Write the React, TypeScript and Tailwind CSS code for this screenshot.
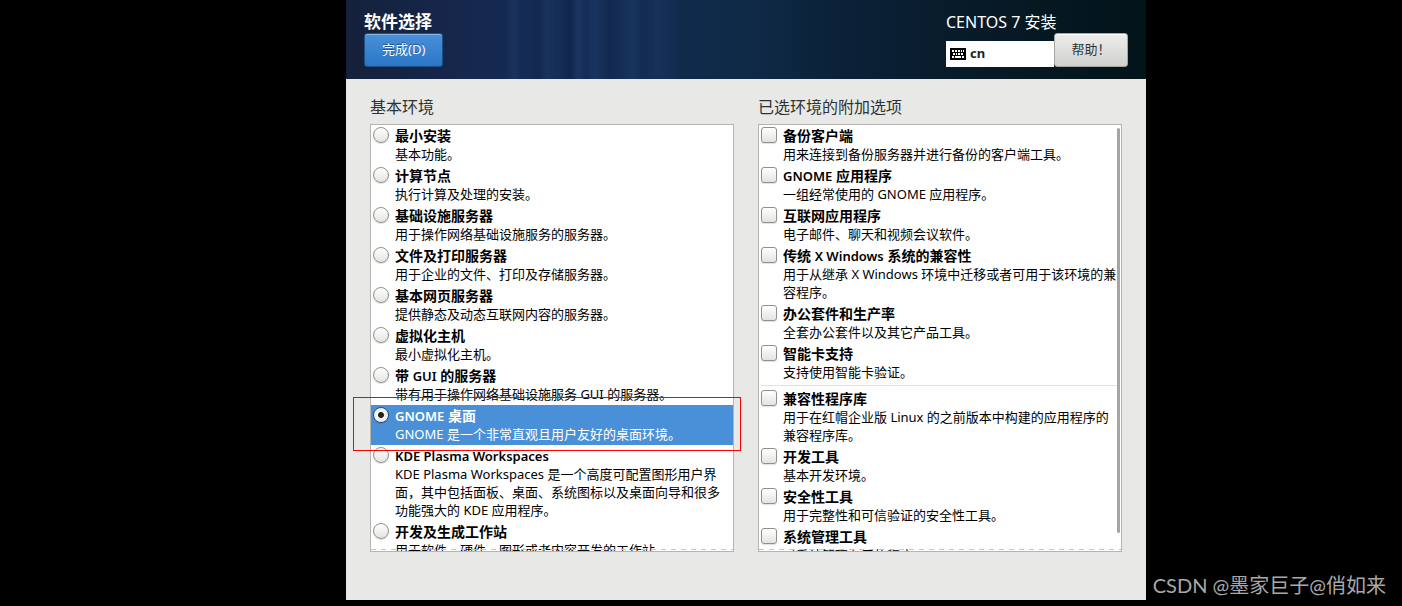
import React from 'react';

type Item = {
  title: string;
  description: string;
};

const environments: Item[] = [
  { title: '最小安装', description: '基本功能。' },
  { title: '计算节点', description: '执行计算及处理的安装。' },
  { title: '基础设施服务器', description: '用于操作网络基础设施服务的服务器。' },
  { title: '文件及打印服务器', description: '用于企业的文件、打印及存储服务器。' },
  { title: '基本网页服务器', description: '提供静态及动态互联网内容的服务器。' },
  { title: '虚拟化主机', description: '最小虚拟化主机。' },
  { title: '带 GUI 的服务器', description: '带有用于操作网络基础设施服务 GUI 的服务器。' },
  { title: 'GNOME 桌面', description: 'GNOME 是一个非常直观且用户友好的桌面环境。' },
  {
    title: 'KDE Plasma Workspaces',
    description: 'KDE Plasma Workspaces 是一个高度可配置图形用户界面，其中包括面板、桌面、系统图标以及桌面向导和很多功能强大的 KDE 应用程序。'
  },
  { title: '开发及生成工作站', description: '用于软件、硬件、图形或者内容开发的工作站。' }
];

const environmentAddons: Item[] = [
  { title: '备份客户端', description: '用来连接到备份服务器并进行备份的客户端工具。' },
  { title: 'GNOME 应用程序', description: '一组经常使用的 GNOME 应用程序。' },
  { title: '互联网应用程序', description: '电子邮件、聊天和视频会议软件。' },
  { title: '传统 X Windows 系统的兼容性', description: '用于从继承 X Windows 环境中迁移或者可用于该环境的兼容程序。' },
  { title: '办公套件和生产率', description: '全套办公套件以及其它产品工具。' },
  { title: '智能卡支持', description: '支持使用智能卡验证。' }
];

const commonAddons: Item[] = [
  { title: '兼容性程序库', description: '用于在红帽企业版 Linux 的之前版本中构建的应用程序的兼容程序库。' },
  { title: '开发工具', description: '基本开发环境。' },
  { title: '安全性工具', description: '用于完整性和可信验证的安全性工具。' },
  { title: '系统管理工具', description: '对系统管理有用的程序。' }
];

const KeyboardIcon = () => (
  <svg width="16" height="12" viewBox="0 0 16 12" shapeRendering="crispEdges" aria-hidden="true">
    <rect width="16" height="12" rx="1" fill="#000" />
    <path
      fill="#fff"
      d="M2 2h2v2H2zM5 2h2v2H5zM8 2h2v2H8zM11 2h1v2h-1zM13 2h1v2h-1zM3 5h2v2H3zM6 5h1v2H6zM8 5h2v2H8zM11 5h2v2h-2zM2 8h2v2H2zM5 8h6v2H5zM12 8h2v2h-2z"
    />
  </svg>
);

// Latin words sit one size below the Chinese glyphs around them
const Title = ({ text }: { text: string }) => (
  <span className="block text-[14px] leading-[18px] font-bold">
    {text.split(/([A-Za-z][A-Za-z ]*[A-Za-z]|[A-Za-z])/).map((part, index) =>
      /[A-Za-z]/.test(part) ? (
        <span key={index} className="text-[13px] font-semibold">{part}</span>
      ) : (
        part
      )
    )}
  </span>
);

const Row = ({ item, type, selected = false }: { item: Item; type: 'radio' | 'checkbox'; selected?: boolean }) => (
  <label className={`flex gap-1.5 p-0.5 ${selected ? 'bg-[#4a90d9] text-white' : 'text-black'}`}>
    <input
      type={type}
      name={type === 'radio' ? 'environment' : item.title}
      defaultChecked={selected}
      className={`size-4 shrink-0 appearance-none border border-[#8f8f8c] bg-linear-to-b from-white to-[#e3e3e1] shadow-[0_1px_1px_rgba(0,0,0,0.12)] ${
        type === 'radio'
          ? 'rounded-full checked:border-[#2d4c70] checked:bg-[radial-gradient(circle,#222_0_2px,#222_2.5px,#f2f2f2_3.5px)]'
          : 'rounded-[3px]'
      }`}
    />
    <span className="min-w-0 flex-1">
      <Title text={item.title} />
      <span className="block text-[13px] leading-[18px]">{item.description}</span>
    </span>
  </label>
);

const Overflow = () => (
  <div className="absolute inset-x-0 bottom-[1px] h-px bg-[repeating-linear-gradient(90deg,#c4c4c4_0_5px,transparent_5px_10px)]" />
);

const App = () => {
  return (
    <div
      lang="zh-CN"
      className="relative flex h-screen flex-col bg-black pr-[256px] pb-1.5 pl-[346px] font-['Noto_Sans','Noto_Sans_CJK_SC',sans-serif]"
    >
      <main className="flex min-h-0 flex-1 flex-col bg-[#e8e8e6]">
        <header className="flex h-[79px] shrink-0 items-start justify-between bg-[linear-gradient(90deg,transparent_20%,rgba(70,120,200,0.1)_21%,transparent_22%,transparent_23%,rgba(0,10,30,0.15)_24%,rgba(70,120,200,0.08)_25%,transparent_27%,rgba(0,10,30,0.2)_28%,rgba(70,120,200,0.12)_29%,transparent_30%,rgba(70,120,200,0.1)_31%,rgba(0,10,30,0.12)_33%,transparent_34%,rgba(70,120,200,0.1)_36%,transparent_37%,rgba(70,120,200,0.08)_39%,transparent_42%),linear-gradient(90deg,#15213a_0%,#16264a_12%,#152c55_25%,#142d56_33%,#102a4c_42%,#0f2a47_50%,#0b2138_62%,#071a27_80%,#021418_100%)] px-[18px] pt-[11px]">
          <div>
            <h1 className="text-[17px] leading-[22px] font-bold text-white">软件选择</h1>
            <button className="h-[34px] rounded-[3px] border border-[#1c5187] bg-linear-to-b from-[#4a90d9] to-[#2a76c6] px-[17px] text-[13px] text-white shadow-[inset_0_1px_0_#86b5e6] [text-shadow:0_-1px_0_rgba(0,0,0,0.4)]">
              完成(D)
            </button>
          </div>
          <div>
            <h2 className="text-[16px] leading-[22px] text-white">CENTOS 7 安装</h2>
            <div className="flex items-end">
              <button className="flex h-[26px] w-[108px] items-center gap-1 bg-white pl-1 text-[13px] font-bold text-[#1c1f20]">
                <KeyboardIcon />
                cn
              </button>
              <button className="h-[34px] w-[74px] rounded-[3px] border border-[#a5a5a1] bg-linear-to-b from-[#ededed] to-[#d0d0cd] text-[13px] text-[#2e3436] shadow-[inset_0_1px_0_#fff]">
                帮助！
              </button>
            </div>
          </div>
        </header>

        <div className="grid min-h-0 flex-1 grid-cols-2 gap-6 px-6 pt-4 pb-12">
          <section className="flex min-h-0 flex-col">
            <h3 className="mb-[5px] text-[16px] leading-6 text-[#2e3436]">基本环境</h3>
            <div className="relative flex min-h-0 flex-1 flex-col">
              <div className="relative min-h-0 flex-1 overflow-hidden border border-[#b4b4b1] bg-white">
                {environments.map((item) => (
                  <Row key={item.title} item={item} type="radio" selected={item.title === 'GNOME 桌面'} />
                ))}
                <Overflow />
              </div>
              {/* callout around the chosen environment */}
              <div className="pointer-events-none absolute top-[273px] -right-[7px] -left-[17px] h-[54px] border border-[#f00]" />
            </div>
          </section>

          <section className="flex min-h-0 flex-col">
            <h3 className="mb-[5px] text-[16px] leading-6 text-[#2e3436]">已选环境的附加选项</h3>
            <div className="relative min-h-0 flex-1 overflow-hidden border border-[#b4b4b1] bg-white">
              {environmentAddons.map((item) => (
                <Row key={item.title} item={item} type="checkbox" />
              ))}
              <hr className="mx-0.5 my-0.5 border-t border-[#e0e0de]" />
              {commonAddons.map((item) => (
                <Row key={item.title} item={item} type="checkbox" />
              ))}
              <div className="absolute top-[3px] right-[1px] h-[95%] w-[3px] rounded-full bg-[#a4a6a6]" />
              <Overflow />
            </div>
          </section>
        </div>
      </main>

      <p className="absolute right-4 bottom-1.5 font-['Lato','Noto_Sans_CJK_SC',sans-serif] text-[20px] leading-[30px] text-[#a8a8a8]">
        CSDN @墨家巨子@俏如来
      </p>
    </div>
  );
};

export default App;
